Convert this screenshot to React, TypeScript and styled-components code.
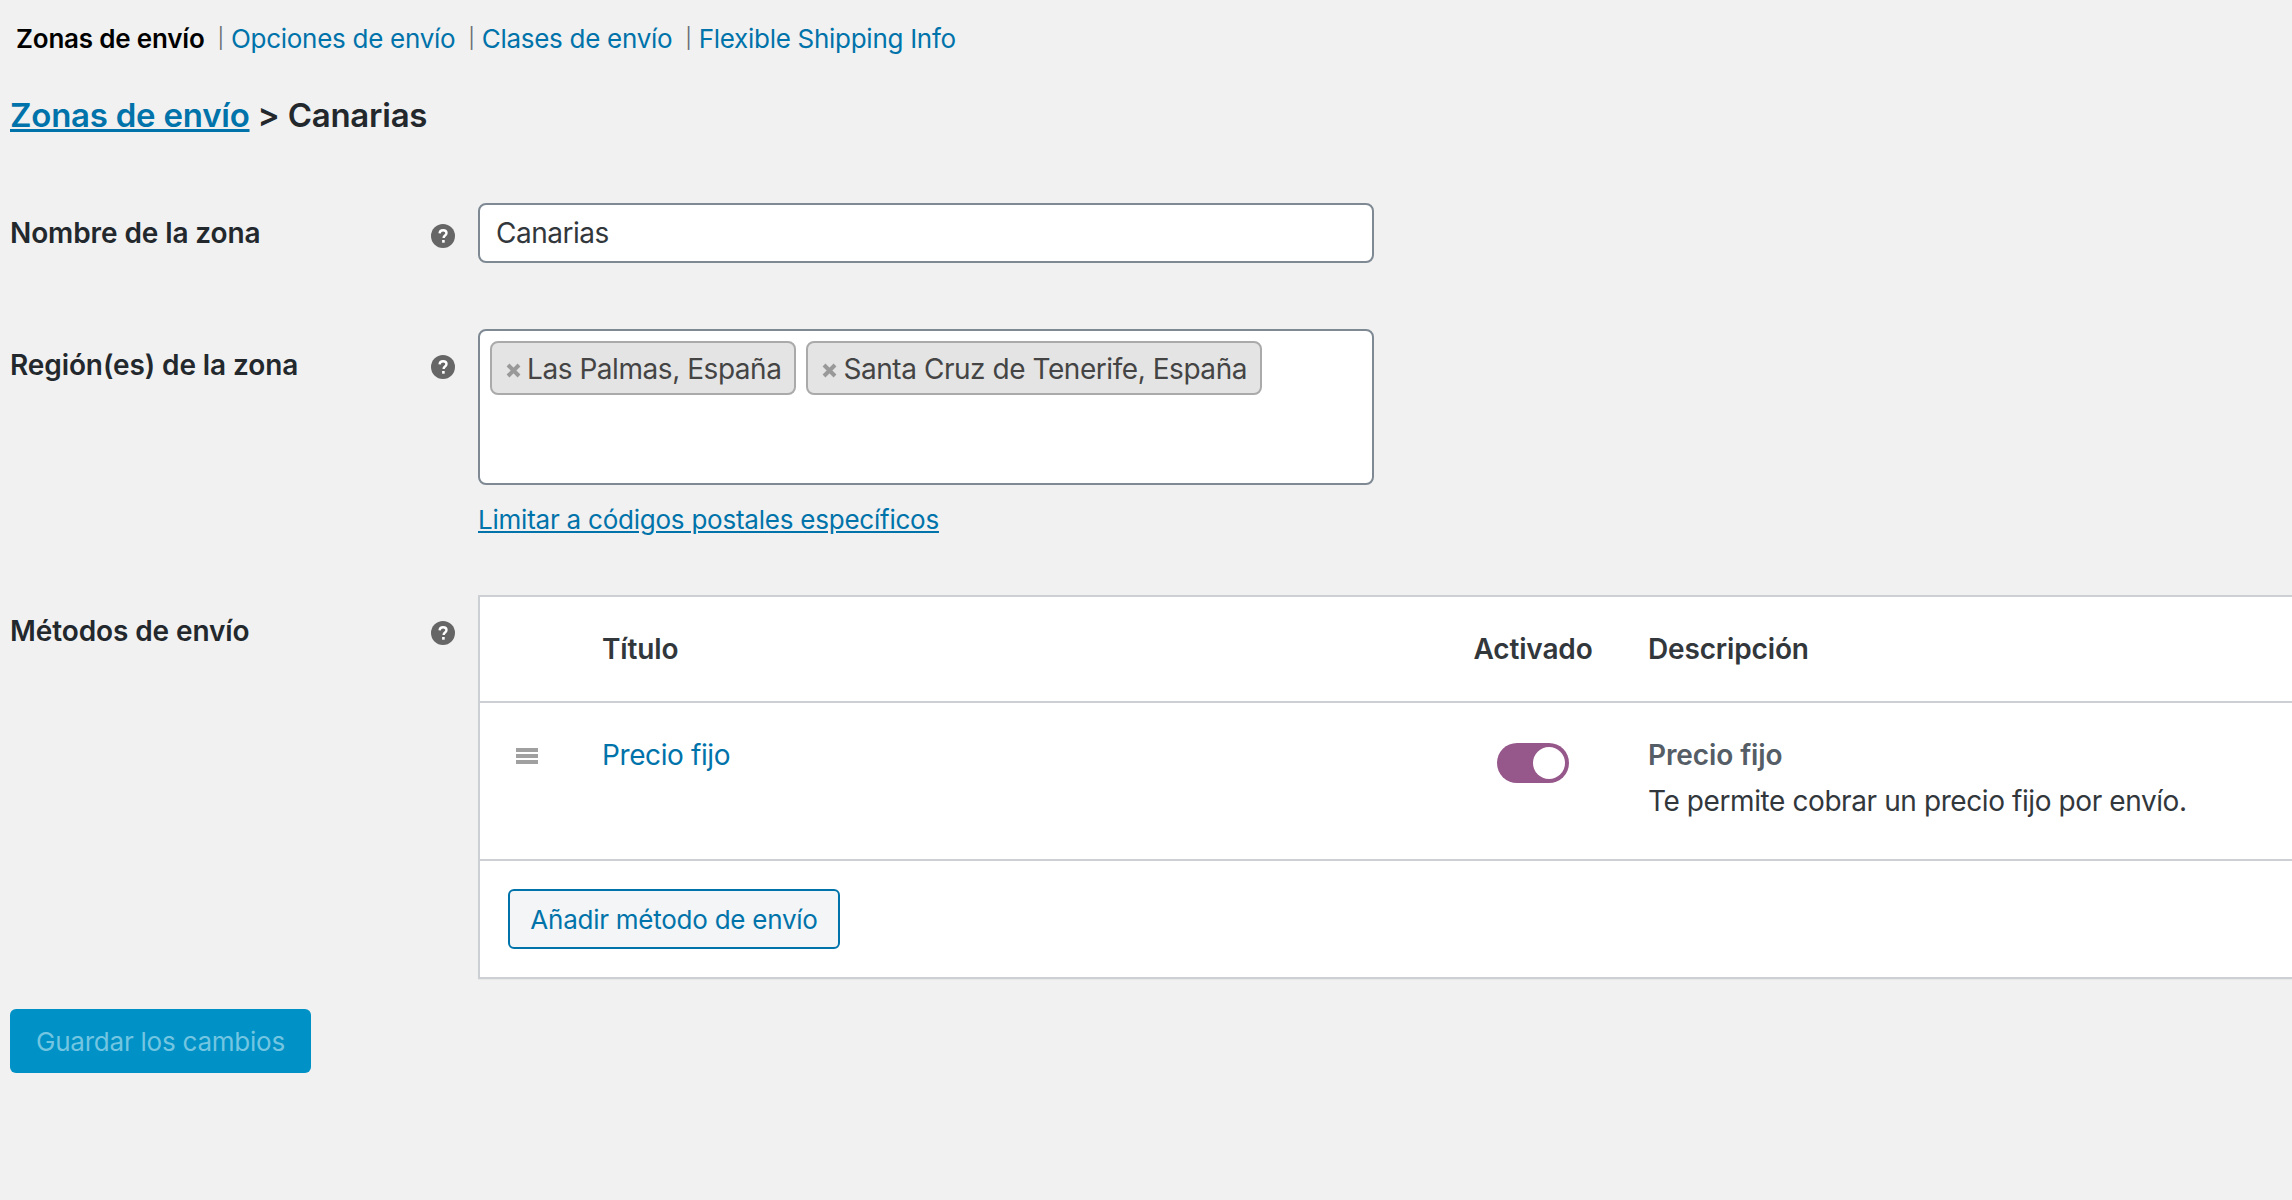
import * as React from 'react'
import styled, { createGlobalStyle } from 'styled-components'

const GlobalStyle = createGlobalStyle`
  html, body {
    margin: 0;
    padding: 0;
    height: 100%;
    overflow: hidden;
    background: #f1f1f1;
    font-family: Inter, "Liberation Sans", sans-serif;
    color: #32373c;
  }
`

const Page = styled.div`
  padding: 16px 0 0 10px;
  width: 2282px;
  height: 1184px;
  overflow: hidden;
`

const Tabs = styled.ul`
  display: flex;
  align-items: center;
  gap: 13px;
  list-style: none;
  margin: 0 0 0 6px;
  padding: 0;
  height: 44px;
  font-size: 26px;
  letter-spacing: -0.28px;
`

const CurrentTab = styled.li`
  color: #000;
  font-weight: 600;
  letter-spacing: -0.2px;
`

const Tab = styled.li`
  display: flex;
  align-items: center;
`

const Separator = styled.span`
  margin-right: 7px;
  font-size: 20px;
  color: #6b7075;
`

const TabLink = styled.a`
  color: #0073aa;
  text-decoration: none;
`

const Heading = styled.h2`
  margin: 33px 0 0;
  height: 44px;
  line-height: 44px;
  font-size: 33px;
  font-weight: 600;
  letter-spacing: -0.24px;
  color: #23282d;
  a {
    color: #0073aa;
  }
`

const Row = styled.div<{ $top: number }>`
  display: grid;
  grid-template-columns: 421px 47px 1fr;
  margin-top: ${p => p.$top}px;
`

const Label = styled.div<{ $top: number }>`
  padding-top: ${p => p.$top}px;
  font-size: 28px;
  font-weight: 600;
  line-height: 36px;
  letter-spacing: -0.1px;
  color: #23282d;
`

const HelpCell = styled.div<{ $top: number }>`
  padding-top: ${p => p.$top}px;
`

const HelpDot = styled.svg`
  display: block;
  width: 24px;
  height: 24px;
`

const Field = styled.div`
  min-width: 0;
`

const NameInput = styled.div`
  box-sizing: border-box;
  width: 896px;
  height: 60px;
  padding: 0 16px;
  display: flex;
  align-items: center;
  background: #fff;
  border: 2px solid #7e8993;
  border-radius: 8px;
  font-size: 28px;
  letter-spacing: -0.5px;
`

const RegionBox = styled.div`
  box-sizing: border-box;
  width: 896px;
  height: 156px;
  padding: 10px;
  display: flex;
  align-items: flex-start;
  gap: 10px;
  background: #fff;
  border: 2px solid #7e8993;
  border-radius: 8px;
`

const Chip = styled.span`
  box-sizing: border-box;
  height: 54px;
  padding: 2px 13px 0 14px;
  display: flex;
  align-items: center;
  gap: 6px;
  background: #e4e4e4;
  border: 2px solid #aaa;
  border-radius: 8px;
  font-size: 28px;
  letter-spacing: -0.45px;
  color: #444;
`

const ChipRemove = styled.svg`
  width: 15px;
  height: 15px;
  margin-top: 2px;
  flex: none;
`

const PostcodeLink = styled.a`
  display: block;
  margin-top: 17px;
  line-height: 36px;
  font-size: 26px;
  letter-spacing: -0.23px;
  color: #0073aa;
`

const MethodsTable = styled.div`
  box-sizing: border-box;
  width: 2000px;
  background: #fff;
  border: 2px solid #ccd0d4;
  border-right: 0;
  box-shadow: 0 1px 1px rgba(0, 0, 0, 0.04);
`

const TableRow = styled.div<{ $height: number }>`
  display: grid;
  grid-template-columns: 122px 833px 196px 1fr;
  height: ${p => p.$height}px;
  border-bottom: 2px solid #ccd0d4;
`

const HeadCell = styled.div<{ $center?: boolean }>`
  display: flex;
  align-items: center;
  justify-content: ${p => (p.$center ? 'center' : 'flex-start')};
  font-size: 28px;
  font-weight: 600;
  letter-spacing: -0.15px;
  color: #32373c;
`

const DescHead = styled(HeadCell)`
  padding-left: 17px;
`

const DragCell = styled.div`
  padding: 45px 0 0 36px;
`

const DragHandle = styled.svg`
  display: block;
  width: 22px;
  height: 16px;
`

const TitleCell = styled.div`
  padding-top: 33px;
  line-height: 38px;
  font-size: 28px;
  letter-spacing: -0.4px;
`

const MethodLink = styled.a`
  color: #0073aa;
  text-decoration: none;
`

const ToggleCell = styled.div`
  padding-top: 40px;
  display: flex;
  justify-content: center;
`

const Toggle = styled.span`
  box-sizing: border-box;
  width: 72px;
  height: 40px;
  padding: 4px;
  display: flex;
  justify-content: flex-end;
  background: #96588a;
  border-radius: 20px;
`

const ToggleKnob = styled.span`
  width: 32px;
  height: 32px;
  border-radius: 50%;
  background: #fff;
`

const DescCell = styled.div`
  padding: 33px 0 0 17px;
  font-size: 28px;
  line-height: 38px;
  letter-spacing: -0.41px;
`

const DescTitle = styled.div`
  font-weight: 600;
  letter-spacing: -0.1px;
  color: #555d66;
  margin-bottom: 8px;
`

const Footer = styled.div`
  padding: 28px 0 28px 28px;
`

const AddButton = styled.button`
  box-sizing: border-box;
  display: block;
  width: 332px;
  height: 60px;
  padding: 0;
  background: #f3f5f6;
  border: 2px solid #0073aa;
  border-radius: 6px;
  font-family: inherit;
  font-size: 26px;
  letter-spacing: -0.25px;
  color: #0073aa;
`

const SaveButton = styled.button`
  display: block;
  width: 301px;
  height: 64px;
  margin-top: 30px;
  padding: 0;
  background: #0092c6;
  border: 0;
  border-radius: 6px;
  font-family: inherit;
  font-size: 26px;
  letter-spacing: -0.23px;
  color: #73c5e1;
`

const HelpIcon: React.FC = () => (
  <HelpDot viewBox="0 0 24 24">
    <circle cx="12" cy="12" r="12" fill="#666" />
    <path
      d="M8.600 9.400c.1-2 1.500-3.200 3.500-3.200s3.400 1.200 3.400 2.900c0 1.300-.7 2-1.700 2.700-.8.600-1.100.9-1.100 1.800v.4"
      fill="none"
      stroke="#fff"
      strokeWidth="2.400"
    />
    <rect x="11.100" y="16" width="2.600" height="2.700" fill="#fff" />
  </HelpDot>
)

const RemoveIcon: React.FC = () => (
  <ChipRemove viewBox="0 0 15 15">
    <path d="M2 2l11 11M13 2L2 13" stroke="#999" strokeWidth="4" />
  </ChipRemove>
)

const App: React.FC = () => (
  <Page>
    <GlobalStyle />
    <Tabs>
      <CurrentTab>Zonas de envío</CurrentTab>
      <Tab><Separator>|</Separator><TabLink href="#">Opciones de envío</TabLink></Tab>
      <Tab><Separator>|</Separator><TabLink href="#">Clases de envío</TabLink></Tab>
      <Tab><Separator>|</Separator><TabLink href="#">Flexible Shipping Info</TabLink></Tab>
    </Tabs>
    <Heading><a href="#">Zonas de envío</a> &gt; Canarias</Heading>

    <Row $top={66}>
      <Label $top={12}>Nombre de la zona</Label>
      <HelpCell $top={21}><HelpIcon /></HelpCell>
      <Field>
        <NameInput>Canarias</NameInput>
      </Field>
    </Row>

    <Row $top={66}>
      <Label $top={18}>Región(es) de la zona</Label>
      <HelpCell $top={26}><HelpIcon /></HelpCell>
      <Field>
        <RegionBox>
          <Chip><RemoveIcon />Las Palmas, España</Chip>
          <Chip><RemoveIcon />Santa Cruz de Tenerife, España</Chip>
        </RegionBox>
        <PostcodeLink href="#">Limitar a códigos postales específicos</PostcodeLink>
      </Field>
    </Row>

    <Row $top={57}>
      <Label $top={18}>Métodos de envío</Label>
      <HelpCell $top={26}><HelpIcon /></HelpCell>
      <Field>
        <MethodsTable>
          <TableRow $height={104}>
            <div />
            <HeadCell>Título</HeadCell>
            <HeadCell $center>Activado</HeadCell>
            <DescHead>Descripción</DescHead>
          </TableRow>
          <TableRow $height={156}>
            <DragCell>
              <DragHandle viewBox="0 0 22 16">
                <path d="M0 0h22v4H0zM0 6h22v4H0zM0 12h22v4H0z" fill="#a0a0a0" />
              </DragHandle>
            </DragCell>
            <TitleCell><MethodLink href="#">Precio fijo</MethodLink></TitleCell>
            <ToggleCell><Toggle><ToggleKnob /></Toggle></ToggleCell>
            <DescCell>
              <DescTitle>Precio fijo</DescTitle>
              Te permite cobrar un precio fijo por envío.
            </DescCell>
          </TableRow>
          <Footer>
            <AddButton>Añadir método de envío</AddButton>
          </Footer>
        </MethodsTable>
      </Field>
    </Row>

    <SaveButton>Guardar los cambios</SaveButton>
  </Page>
)

export default App
